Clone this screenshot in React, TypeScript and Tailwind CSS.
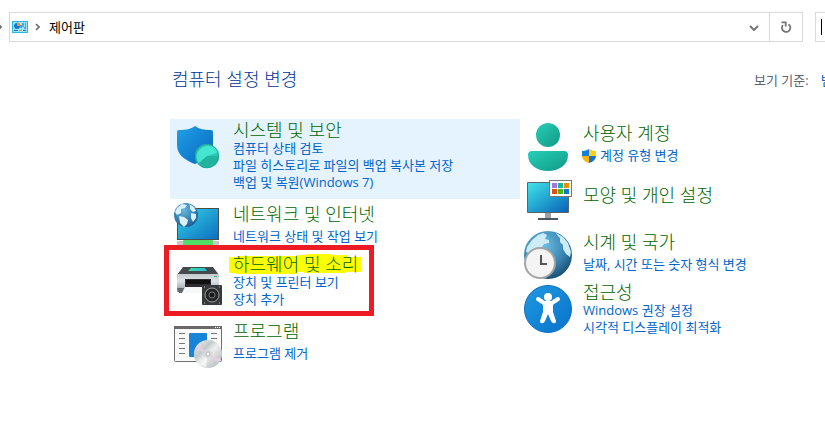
import type { ReactNode } from "react";

function ShieldIcon() {
  return (
    <svg viewBox="0 0 48 48" className="h-12 w-12" aria-hidden="true">
      <defs>
        <linearGradient id="shield" x1="0" y1="0" x2="1" y2="1">
          <stop offset="0" stopColor="#22a0e6" />
          <stop offset="1" stopColor="#0566bf" />
        </linearGradient>
      </defs>
      <path d="M21 3c4 3 9 4 16 4q2 0 2 2v13c0 9-7 15-18 19C10 37 3 31 3 22V9q0-2 2-2c7 0 12-1 16-4z" fill="url(#shield)" />
      <circle cx="33" cy="33" r="12" fill="#2fc9b5" />
      <path d="M33 33l12-4A12 12 0 1 0 24 41z" fill="#43e6d0" />
      <path d="M33 33h12a12 12 0 0 1-21 8z" fill="#21b39f" />
      <circle cx="33" cy="33" r="11.500" fill="none" stroke="#20a796" />
    </svg>
  );
}

function NetworkIcon() {
  return (
    <svg viewBox="0 0 48 48" className="h-12 w-12" aria-hidden="true">
      <defs>
        <linearGradient id="netscreen" x1="0" y1="0" x2="1" y2="1">
          <stop offset="0" stopColor="#35d2e6" />
          <stop offset="1" stopColor="#0d6fc0" />
        </linearGradient>
        <radialGradient id="netglobe" cx=".4" cy=".3" r=".8">
          <stop offset="0" stopColor="#66b7df" />
          <stop offset="1" stopColor="#16548b" />
        </radialGradient>
      </defs>
      <rect x="3" y="5" width="42" height="32" fill="#4c4c4c" />
      <rect x="4" y="6" width="40" height="30" fill="url(#netscreen)" />
      <rect x="3" y="38" width="42" height="5" fill="#c8c8c8" />
      <rect x="9" y="37" width="30" height="8" rx="1" fill="#53dc68" />
      <circle cx="12" cy="12" r="12" fill="url(#netglobe)" />
      <path d="M3 5l5-4 5 1-2 3-4 1 0 4-4 2-2-3zM15 1l5 3 2 4-3 1-3-3 0-3zM5 13l5 1 4 3-1 4-3 3-4-4zM17 10l5 1 0 4-3 4-2-4z" fill="#d8f1fa" />
    </svg>
  );
}

function PrinterIcon() {
  return (
    <svg viewBox="0 0 48 48" className="h-12 w-12" aria-hidden="true">
      <defs>
        <linearGradient id="printer" x1="0" y1="0" x2="0" y2="1">
          <stop offset="0" stopColor="#c3c8cd" />
          <stop offset=".4" stopColor="#dfe3e7" />
          <stop offset="1" stopColor="#8d9399" />
        </linearGradient>
        <linearGradient id="printerlight" x1="0" y1="0" x2="1" y2="0">
          <stop offset="0" stopColor="#37e0a2" />
          <stop offset="1" stopColor="#28b7d8" />
        </linearGradient>
      </defs>
      <path d="M9 9h30l6 8H3z" fill="#45484c" />
      <path d="M17 10h14l2 3H14z" fill="url(#printerlight)" />
      <path d="M3 16h42v18H3z" fill="url(#printer)" />
      <path d="M40 18h3v1h-3z" fill="#36b37a" />
      <path d="M11 21h26v10H11z" fill="#2b2d30" />
      <path d="M12 22h24v4H12z" fill="#111" />
      <path d="M11 29h26l2 6H8z" fill="#f7f7f7" />
      <path d="M3 30h7l-2 5H5z" fill="#65696e" />
      <rect x="28" y="27" width="20" height="20" rx="1" fill="#37393c" />
      <circle cx="38" cy="37" r="7" fill="#222426" stroke="#9da0a3" />
      <circle cx="38" cy="37" r="3" fill="#17191b" stroke="#77797c" />
      <path d="M30 29h1M45 29h1M30 45h1M45 45h1" stroke="#bbb" />
    </svg>
  );
}

function ProgramsIcon() {
  return (
    <svg viewBox="0 0 48 48" className="h-12 w-12" aria-hidden="true">
      <defs>
        <linearGradient id="disc" x1="0" y1="0" x2="1" y2="1">
          <stop offset="0" stopColor="#f1f1f1" />
          <stop offset=".35" stopColor="#c3c9ca" />
          <stop offset=".5" stopColor="#eeeeee" />
          <stop offset="1" stopColor="#aab0b1" />
        </linearGradient>
      </defs>
      <rect x=".500" y="5.500" width="47" height="35" rx="1" fill="#fafafa" stroke="#6e6e6e" />
      <path d="M0 5h48v3H0z" fill="#6b6868" />
      <path d="M41 6.500h1M43 6.500h1M45 6.500h1" stroke="#fff" />
      <path d="M5 12.500h6M5 17.500h6M5 22.500h6M5 27.500h6M5 32.500h6M37 12.500h6M37 17.500h6M37 22.500h6" stroke="#777" />
      <rect x="15" y="12" width="18" height="24" rx="1" fill="#1684d8" />
      <circle cx="34" cy="33" r="14" fill="url(#disc)" />
      <path d="M34 33L21 28l3-5zM34 33l13 5-3 4z" fill="#e9cfeb" opacity=".75" />
      <path d="M34 33l-8 11 6 2z" fill="#fff" opacity=".6" />
      <circle cx="34" cy="33" r="4" fill="#d7d9d9" />
      <circle cx="34" cy="33" r="2" fill="#fff" stroke="#b7b7b7" />
    </svg>
  );
}

function UserIcon() {
  return (
    <svg viewBox="0 0 48 48" className="h-12 w-12" aria-hidden="true">
      <defs>
        <linearGradient id="user" x1="0" y1="0" x2="1" y2="1">
          <stop offset="0" stopColor="#27cfb8" />
          <stop offset="1" stopColor="#119985" />
        </linearGradient>
      </defs>
      <circle cx="24" cy="12" r="12" fill="url(#user)" />
      <path d="M8 28h32q4 0 4 4c0 10-9 16-20 16S4 42 4 32q0-4 4-4z" fill="url(#user)" />
    </svg>
  );
}

function PersonalizeIcon() {
  return (
    <svg viewBox="0 0 48 48" className="h-12 w-12" aria-hidden="true">
      <defs>
        <linearGradient id="desk" x1="0" y1="0" x2="1" y2="1">
          <stop offset="0" stopColor="#3fe3e8" />
          <stop offset="1" stopColor="#0863b8" />
        </linearGradient>
      </defs>
      <path d="M21 37h6v6h-6z" fill="#9aa1a8" />
      <path d="M14 42h20v2H14z" fill="#4d555c" />
      <rect x="3" y="6" width="42" height="31" rx="1" fill="#59636b" />
      <rect x="4" y="7" width="40" height="29" fill="url(#desk)" />
      <rect x="25.500" y="4.500" width="22" height="16" fill="#fff" stroke="#777" />
      <path d="M28 7h5v5h-5z" fill="#a177d8" />
      <path d="M34 7h5v5h-5z" fill="#13b5a0" />
      <path d="M40 7h5v5h-5z" fill="#f08a00" />
      <path d="M28 13h5v5h-5z" fill="#e04f16" />
      <path d="M34 13h5v5h-5z" fill="#4fb813" />
      <path d="M40 13h5v5h-5z" fill="#0f78d4" />
    </svg>
  );
}

function ClockIcon() {
  return (
    <svg viewBox="0 0 48 48" className="h-12 w-12" aria-hidden="true">
      <defs>
        <radialGradient id="globe" cx=".4" cy=".3" r=".75">
          <stop offset="0" stopColor="#6fc0e4" />
          <stop offset=".6" stopColor="#3986b3" />
          <stop offset="1" stopColor="#184a6d" />
        </radialGradient>
      </defs>
      <circle cx="24" cy="24" r="24" fill="url(#globe)" />
      <path d="M3 16l5-7 6-5 5-2 4 2-2 4 4 1 0 3-5 1-2 3-4 0-2 3-4 0-3 3-3-1zM32 2l7 4 5 6 3 9-1 5-4-3-3-5 0-4-3-3 0-4-3-3z" fill="#cdecf6" />
      <circle cx="16" cy="32" r="15" fill="#f4f4f4" stroke="#a5a5a5" strokeWidth="2" />
      <path d="M17 24v9h6" fill="none" stroke="#555" strokeWidth="2" />
    </svg>
  );
}

function AccessIcon() {
  return (
    <svg viewBox="0 0 48 48" className="h-12 w-12" aria-hidden="true">
      <defs>
        <linearGradient id="access" x1="0" y1="0" x2="1" y2="1">
          <stop offset="0" stopColor="#2099e2" />
          <stop offset="1" stopColor="#0873ca" />
        </linearGradient>
      </defs>
      <circle cx="24" cy="24" r="23.500" fill="url(#access)" stroke="#0a70c4" />
      <circle cx="24" cy="12" r="4" fill="#fff" />
      <path d="M14 14l6 4h8l6-4" fill="none" stroke="#fff" strokeWidth="4" strokeLinecap="round" strokeLinejoin="round" />
      <path d="M19 17h10v10l3 9q0 3-3 2-1 0-2-2l-3-7-3 7q-1 2-2 2-3 1-3-2l3-9z" fill="#fff" />
    </svg>
  );
}

function UacIcon() {
  return (
    <svg viewBox="0 0 14 14" className="h-[14px] w-[14px]" aria-hidden="true">
      <path d="M7 0C5 1 3 2 0 2v5h7z" fill="#1680d8" />
      <path d="M7 0c2 1 4 2 7 2v5H7z" fill="#ffcf1b" />
      <path d="M0 7c0 3 3 6 7 7V7z" fill="#f8b60c" />
      <path d="M14 7c0 3-3 6-7 7V7z" fill="#1570c8" />
    </svg>
  );
}

function PanelIcon() {
  return (
    <svg viewBox="0 0 16 12" className="h-3 w-4" aria-hidden="true">
      <rect width="16" height="12" fill="#28b5ea" />
      <rect x="1" y="1" width="14" height="10" fill="#9be3fb" />
      <circle cx="5" cy="5" r="3" fill="#1978ce" />
      <path d="M5 5V1a4 4 0 0 1 3 4z" fill="#f7941d" />
      <path d="M9 7V4M11 6V2M13 3h1M13 5h1M12 7h2" stroke="#1565b0" />
      <path d="M2 9.500h4" stroke="#1978ce" />
      <path d="M7 9.500h3" stroke="#f7941d" />
      <path d="M11 9.500h3" stroke="#1978ce" />
    </svg>
  );
}

function Crumb() {
  return (
    <svg viewBox="0 0 5 8" className="h-2 w-[5px] shrink-0" aria-hidden="true">
      <path d="M1 1l3 3-3 3" fill="none" stroke="#6d6d6d" strokeWidth="1.600" />
    </svg>
  );
}

type CategoryProps = {
  icon: ReactNode;
  title: string;
  tasks: string[];
  className: string;
  iconClass?: string;
  bodyClass?: string;
  spaced?: boolean;
  shield?: boolean;
  marked?: boolean;
};

function Category({ icon, title, tasks, className, iconClass = "", bodyClass = "", spaced, shield, marked }: CategoryProps) {
  return (
    <section className={`relative flex items-start gap-[11px] pl-1 ${className}`}>
      <div className={`shrink-0 ${iconClass}`}>{icon}</div>
      <div className={bodyClass}>
        <h2 className="text-[18px] font-light leading-5 text-[#006600]">
          <a href="#" className="relative inline-block">
            {marked && (
              <svg viewBox="0 0 132 20" className="absolute -left-1 top-0 h-5 w-[132px]" aria-hidden="true">
                <path d="M0 3h8V2h60V1h8V0h27v1h16v2h13v15h-15v1H75v-1h-7v2H7v-1H0z" fill="#ff0" />
              </svg>
            )}
            <span className="relative">{title}</span>
          </a>
        </h2>
        {tasks.length > 0 && (
          <ul className={spaced ? "pt-1" : ""}>
            {tasks.map((task) => (
              <li key={task} className="text-[13px] leading-[17px] text-[#0066cc]">
                <a href="#" className={shield ? "-ml-px flex items-center gap-1" : ""}>
                  {shield && <UacIcon />}
                  {task}
                </a>
              </li>
            ))}
          </ul>
        )}
      </div>
      {marked && <div className="pointer-events-none absolute -left-[6px] -top-1 h-[71px] w-[210px] border-5 border-[#ed1c24]" />}
    </section>
  );
}

export default function App() {
  return (
    <div className="min-h-screen overflow-hidden bg-white font-['Open_Sans','Noto_Sans_CJK_KR',sans-serif] whitespace-nowrap">
      <header className="flex pt-3">
        <div className="flex w-[9px] items-center overflow-hidden">
          <div className="-ml-[3px] flex">
            <Crumb />
          </div>
        </div>
        <div className="flex h-[30px] flex-1 border border-[#d9d9d9]">
          <nav className="flex flex-1 items-center gap-[7px] pl-[2px]">
            <PanelIcon />
            <Crumb />
            <a href="#" className="ml-[2px] text-[13px] leading-5 text-black">제어판</a>
          </nav>
          <button type="button" aria-label="이전 위치" className="flex w-[30px] items-center justify-center">
            <svg viewBox="0 0 10 6" className="mt-[2px] h-[6px] w-[10px]" aria-hidden="true">
              <path d="M1 1l4 4 4-4" fill="none" stroke="#777" strokeWidth="2" />
            </svg>
          </button>
          <button type="button" aria-label="새로 고침" className="flex w-[33px] items-center justify-center border-l border-[#d9d9d9]">
            <svg viewBox="0 0 12 12" className="h-3 w-3" aria-hidden="true">
              <path d="M8.500 3.300a4.200 4.200 0 1 1-5.500.700" fill="none" stroke="#777" strokeWidth="1.800" />
              <path d="M1.500 1.300h4.200v4.200" fill="none" stroke="#777" strokeWidth="1.800" />
            </svg>
          </button>
        </div>
        <div className="ml-3 flex w-[10px] items-center overflow-hidden border border-r-0 border-[#d9d9d9] pl-[5px]">
          <span className="h-4 w-px shrink-0 bg-black" />
          <input aria-label="검색" className="w-1 outline-none" />
        </div>
      </header>

      <main className="pl-[170px] pt-6">
        <div className="mb-[26px] flex items-center justify-between pl-[2px]">
          <h1 className="text-[18px] font-light leading-[27px] text-[#003399]">컴퓨터 설정 변경</h1>
          <div className="flex w-[71px] gap-3 overflow-hidden text-[13px] leading-5">
            <span className="shrink-0 text-[#5a6475]">보기 기준:</span>
            <a href="#" className="text-[#0066cc]">범주</a>
          </div>
        </div>
        <div className="grid grid-cols-[350px_1fr] items-start">
          <div>
            <Category className="bg-[#e5f3ff] pb-2 pt-px" iconClass="pt-[3px]" icon={<ShieldIcon />} title="시스템 및 보안" tasks={["컴퓨터 상태 검토", "파일 히스토리로 파일의 백업 복사본 저장", "백업 및 복원(Windows 7)"]} />
            <Category className="h-[50px] pt-[5px]" iconClass="-mt-px" icon={<NetworkIcon />} title="네트워크 및 인터넷" tasks={["네트워크 상태 및 작업 보기"]} spaced />
            <Category className="h-[67px] pt-[5px]" iconClass="pt-1" icon={<PrinterIcon />} title="하드웨어 및 소리" tasks={["장치 및 프린터 보기", "장치 추가"]} marked />
            <Category className="pt-[5px]" icon={<ProgramsIcon />} title="프로그램" tasks={["프로그램 제거"]} spaced />
          </div>
          <div>
            <Category className="h-[57px] pt-1" icon={<UserIcon />} title="사용자 계정" tasks={["계정 유형 변경"]} spaced shield />
            <Category className="h-[51px]" icon={<PersonalizeIcon />} bodyClass="pt-[9px]" title="모양 및 개인 설정" tasks={[]} />
            <Category className="h-[54px] pt-1" icon={<ClockIcon />} bodyClass="pt-px" title="시계 및 국가" tasks={["날짜, 시간 또는 숫자 형식 변경"]} spaced />
            <Category className="pt-px" iconClass="pt-[3px]" icon={<AccessIcon />} title="접근성" tasks={["Windows 권장 설정", "시각적 디스플레이 최적화"]} />
          </div>
        </div>
      </main>
    </div>
  );
}
